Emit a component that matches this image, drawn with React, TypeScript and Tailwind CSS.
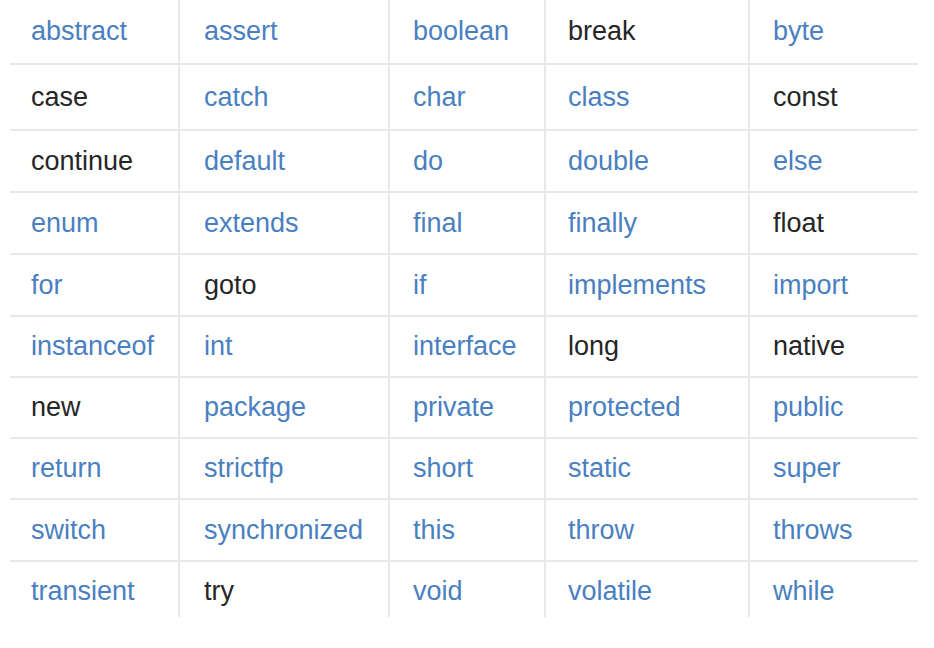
const rows: [string, boolean][][] = [
  [["abstract", true], ["assert", true], ["boolean", true], ["break", false], ["byte", true]],
  [["case", false], ["catch", true], ["char", true], ["class", true], ["const", false]],
  [["continue", false], ["default", true], ["do", true], ["double", true], ["else", true]],
  [["enum", true], ["extends", true], ["final", true], ["finally", true], ["float", false]],
  [["for", true], ["goto", false], ["if", true], ["implements", true], ["import", true]],
  [["instanceof", true], ["int", true], ["interface", true], ["long", false], ["native", false]],
  [["new", false], ["package", true], ["private", true], ["protected", true], ["public", true]],
  [["return", true], ["strictfp", true], ["short", true], ["static", true], ["super", true]],
  [["switch", true], ["synchronized", true], ["this", true], ["throw", true], ["throws", true]],
  [["transient", true], ["try", false], ["void", true], ["volatile", true], ["while", true]],
];

const pad = ["pl-[21px]", "pl-[24px]", "pl-[23px]", "pl-[22px]", "pl-[23px]"];

export default function App() {
  return (
    <div className="h-[648px] w-[934px] bg-white" style={{ fontFamily: '"Liberation Sans", Arial, sans-serif' }}>
      {/* gaps on a grey grid draw the rules */}
      <div className="ml-[10px] grid w-[908px] gap-[2px] bg-[#e8e8e8] grid-cols-[168px_208px_154px_202px_168px] grid-rows-[63px_64px_60px_60px_60px_59px_59px_59px_60px_55px]">
        {rows.map((row, r) =>
          row.map(([word, link], c) => (
            <div
              key={word}
              className={[
                "flex items-center bg-white text-[27px] leading-none",
                r === rows.length - 1 ? "pt-[4px]" : "",
                pad[c],
                link ? "text-[#4a7fc1]" : "text-[#262626]",
              ].join(" ")}
            >
              {word}
            </div>
          )),
        )}
      </div>
    </div>
  );
}
